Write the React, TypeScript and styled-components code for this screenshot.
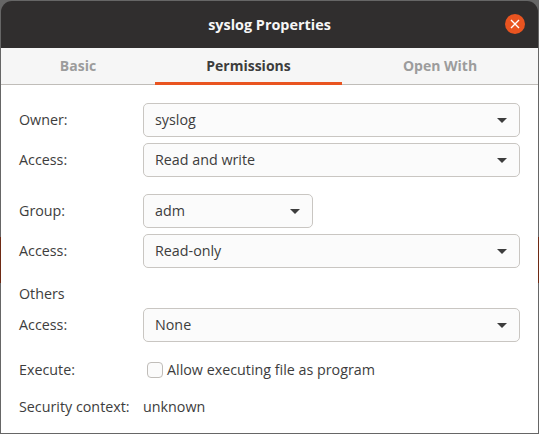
import React from "react";
import styled, { createGlobalStyle } from "styled-components";

const Global = createGlobalStyle`
  html, body { margin: 0; padding: 0; background: #6b6b6b; }
  * { box-sizing: border-box; }
`;

const Frame = styled.div`
  width: 539px;
  height: 434px;
  background: linear-gradient(
    to bottom,
    #666666 0,
    #666666 237px,
    #6e2a14 237px,
    #6e2a14 283px,
    #666666 283px
  );
  padding: 1px;
  font-family: "Open Sans", "Noto Sans", sans-serif;
  font-size: 14.3px;
  color: #3d3d3d;
  display: flex;
  flex-direction: column;
  overflow: hidden;
`;

const TitleBar = styled.header`
  height: 47px;
  flex: none;
  background: #302e2e;
  border-radius: 11px 11px 0 0;
  color: #f6f6f6;
  font-weight: 700;
  font-size: 14.4px;
  padding-bottom: 1px;
  display: flex;
  align-items: center;
  justify-content: center;
  position: relative;
`;

const Close = styled.button`
  position: absolute;
  right: 13px;
  top: 13px;
  width: 20px;
  height: 20px;
  border: 0;
  padding: 0;
  border-radius: 50%;
  background: #e95420;
  display: flex;
  align-items: center;
  justify-content: center;
`;

const Tabs = styled.nav`
  height: 37px;
  flex: none;
  display: grid;
  grid-template-columns: 154px 187px 1fr;
  background: #f6f6f6;
  border-bottom: 1px solid #c0bdb9;
`;

const Tab = styled.div<{ $active?: boolean }>`
  display: flex;
  align-items: center;
  justify-content: center;
  font-weight: 700;
  font-size: 14px;
  color: ${(p) => (p.$active ? "#3d3d3d" : "#9c9c9c")};
  height: 37px;
  padding-top: 1px;
  border-bottom: 3px solid ${(p) => (p.$active ? "#e95420" : "transparent")};
`;

const Body = styled.main`
  flex: 1;
  background: #ffffff;
  padding: 18px 18px 0 18px;
  display: flex;
  flex-direction: column;
`;

const Row = styled.div<{ $top?: number }>`
  display: grid;
  grid-template-columns: 124px 1fr;
  align-items: center;
  height: 34px;
  margin-top: ${(p) => p.$top ?? 0}px;
`;

const Text = styled.span`
  white-space: nowrap;
  padding-bottom: 2px;
`;

const Heading = styled.div`
  height: 18px;
  margin-top: 16px;
  display: flex;
  align-items: center;
`;

const Select = styled.div<{ $narrow?: boolean }>`
  height: 34px;
  width: ${(p) => (p.$narrow ? "170px" : "377px")};
  border: 1px solid #c9c6c2;
  border-radius: 5px;
  background: #fbfbfb;
  padding: 0 11px;
  display: flex;
  align-items: center;
  justify-content: space-between;
`;

const Arrow = styled.i`
  width: 0;
  height: 0;
  border-left: 5px solid transparent;
  border-right: 5px solid transparent;
  border-top: 5px solid #3d3d3d;
  margin-right: 1px;
`;

const CheckLine = styled.label`
  display: flex;
  align-items: center;
  gap: 4px;
  margin-left: 4px;
`;

const Box = styled.span`
  width: 16px;
  height: 16px;
  border: 1px solid #c0bdb9;
  border-radius: 4px;
  background: #fbfbfb;
`;

function Choice({ value, narrow }: { value: string; narrow?: boolean }) {
  return (
    <Select $narrow={narrow}>
      <Text>{value}</Text>
      <Arrow />
    </Select>
  );
}

export default function App() {
  return (
    <Frame>
      <Global />
      <TitleBar>
        syslog Properties
        <Close aria-label="Close">
          <svg width="10" height="10" viewBox="0 0 10 10">
            <path d="M1 1L9 9M9 1L1 9" stroke="#fff" strokeWidth="1.4" fill="none" />
          </svg>
        </Close>
      </TitleBar>
      <Tabs>
        <Tab>Basic</Tab>
        <Tab $active>Permissions</Tab>
        <Tab>Open With</Tab>
      </Tabs>
      <Body>
        <Row>
          <Text>Owner:</Text>
          <Choice value="syslog" />
        </Row>
        <Row $top={6}>
          <Text>Access:</Text>
          <Choice value="Read and write" />
        </Row>
        <Row $top={17}>
          <Text>Group:</Text>
          <Choice value="adm" narrow />
        </Row>
        <Row $top={6}>
          <Text>Access:</Text>
          <Choice value="Read-only" />
        </Row>
        <Heading>Others</Heading>
        <Row $top={6}>
          <Text>Access:</Text>
          <Choice value="None" />
        </Row>
        <Row $top={11}>
          <Text>Execute:</Text>
          <CheckLine>
            <Box />
            <Text>Allow executing file as program</Text>
          </CheckLine>
        </Row>
        <Row $top={3}>
          <Text>Security context:</Text>
          <Text>unknown</Text>
        </Row>
      </Body>
    </Frame>
  );
}
